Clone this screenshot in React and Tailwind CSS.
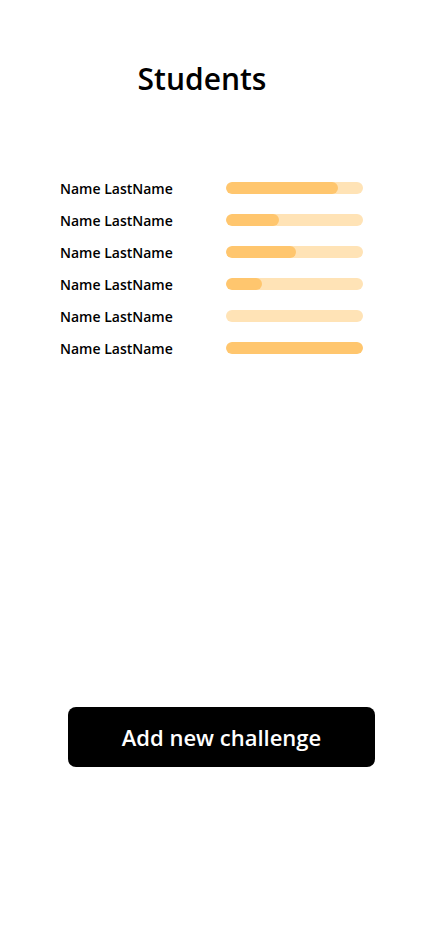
export default function App() {
  const rows = [82, 39, 51, 26, 0, 100];
  return (
    <div className="w-[430px] h-[932px] bg-white flex flex-col" style={{ fontFamily: '"Open Sans", "Noto Sans", sans-serif' }}>
      <div className="w-[404px] text-center pt-[59px] text-[30px] leading-[40px] font-semibold text-black">Students</div>
      <div className="flex flex-col pt-[79px] pl-[60px] gap-[12px]">
        {rows.map((p, i) => (
          <div key={i} className="flex items-center h-[20px]">
            <div className="w-[166px] text-[14px] font-semibold text-black">Name LastName</div>
            <div className="w-[137px] h-[12px] rounded-full bg-[#FFE3B6] overflow-hidden">
              <div className="h-full rounded-full bg-[#FFC66E]" style={{ width: `${p}%` }} />
            </div>
          </div>
        ))}
      </div>
      <div className="flex-1" />
      <div className="pl-[68px] pb-[165px]">
        <button className="w-[307px] h-[60px] rounded-[8px] bg-black text-white text-[22px] font-semibold">Add new challenge</button>
      </div>
    </div>
  );
}
